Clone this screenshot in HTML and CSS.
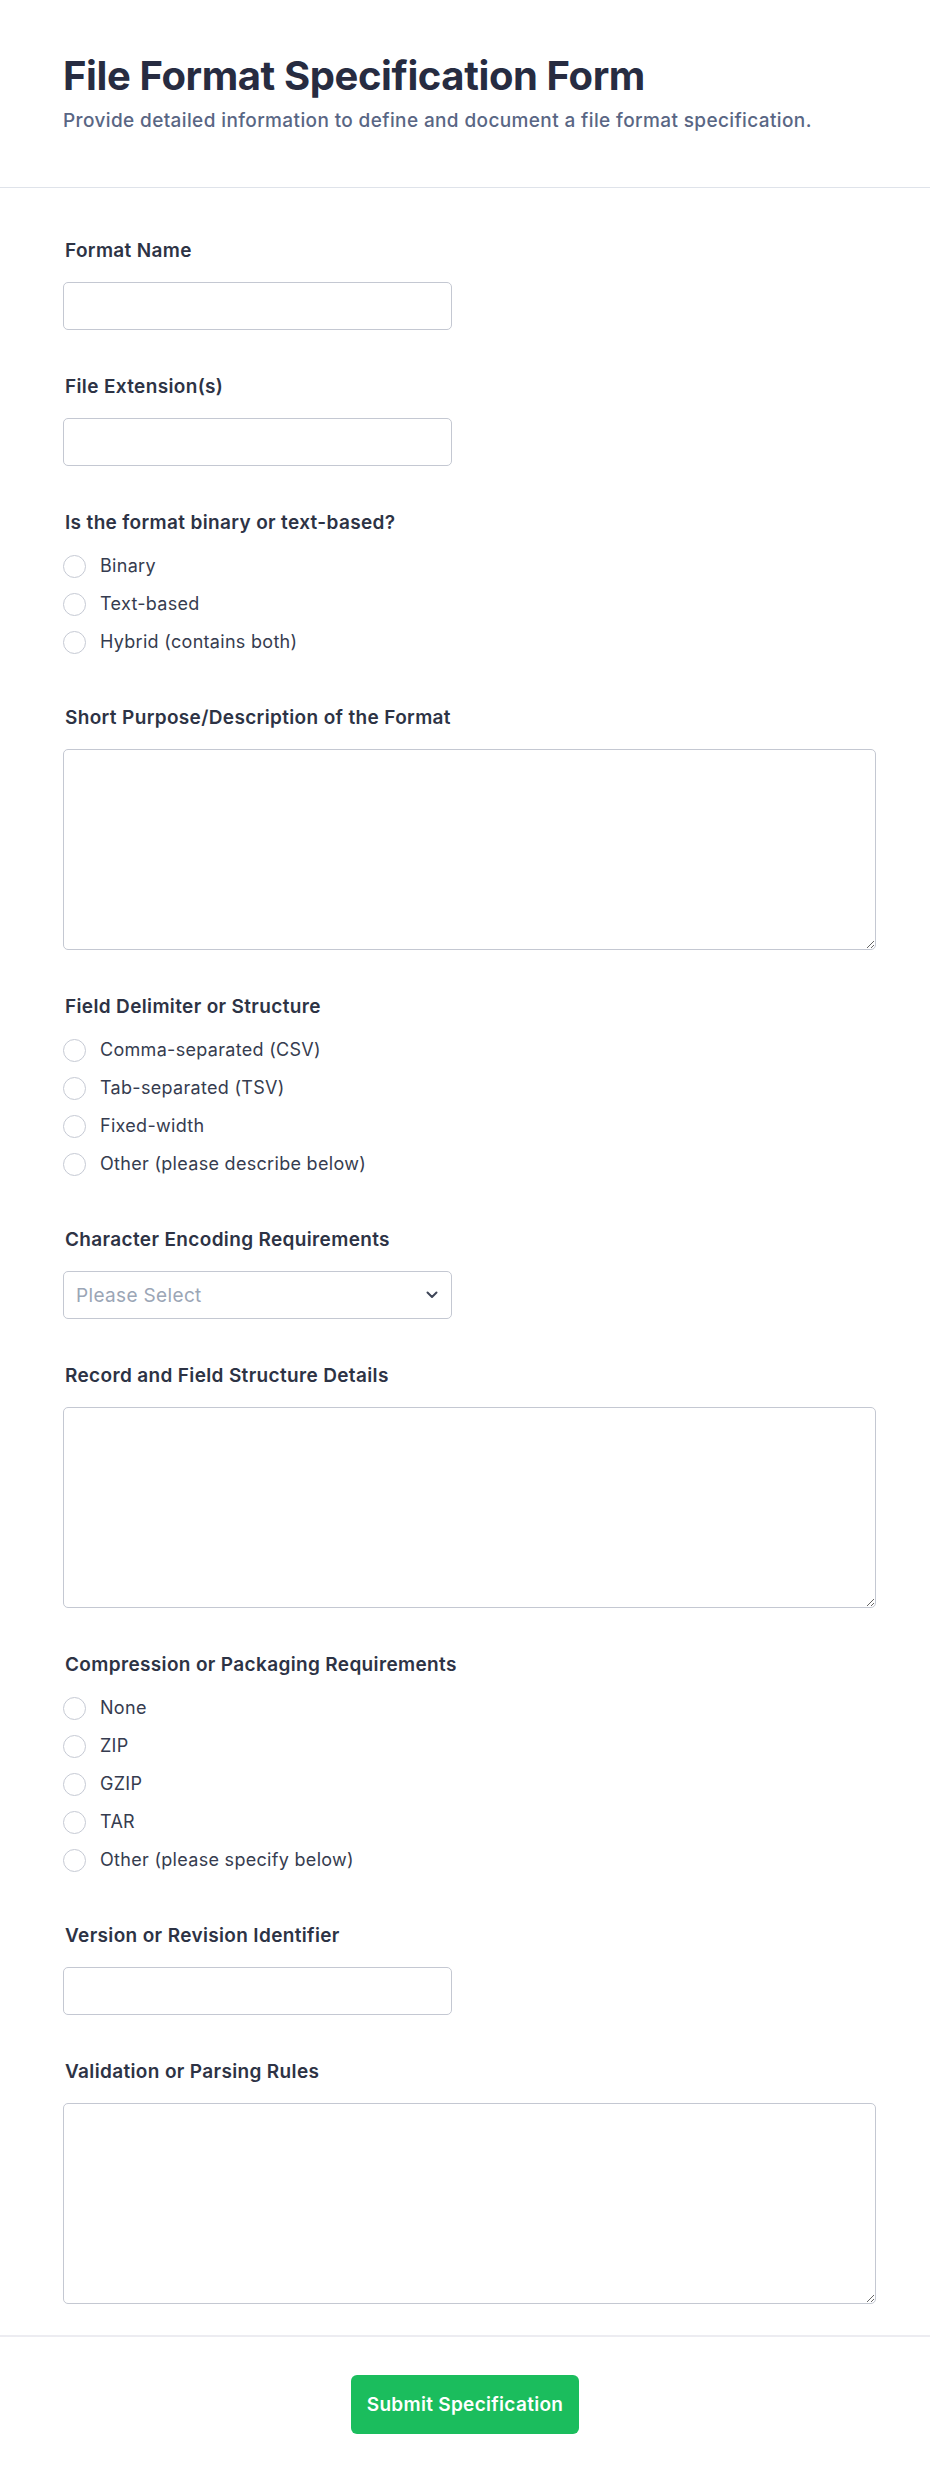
FILE: index.html
```html
<!DOCTYPE html>
<html lang="en">
<head>
<meta charset="utf-8">
<title>File Format Specification Form</title>
<link rel="stylesheet" href="styles.css">
</head>
<body>
<div class="page">
  <header class="header">
    <h1 class="title">File Format Specification Form</h1>
    <p class="subtitle">Provide detailed information to define and document a file format specification.</p>
  </header>

  <form class="form">
    <div class="field">
      <label class="label" for="fname">Format Name</label>
      <input class="input" id="fname" type="text">
    </div>

    <div class="field">
      <label class="label" for="fext">File Extension(s)</label>
      <input class="input" id="fext" type="text">
    </div>

    <div class="field">
      <div class="label label-group">Is the format binary or text-based?</div>
      <div class="options">
        <label class="option"><input class="radio" type="radio" name="kind"><span>Binary</span></label>
        <label class="option"><input class="radio" type="radio" name="kind"><span>Text-based</span></label>
        <label class="option"><input class="radio" type="radio" name="kind"><span>Hybrid (contains both)</span></label>
      </div>
    </div>

    <div class="field">
      <label class="label" for="purpose">Short Purpose/Description of the Format</label>
      <textarea class="textarea" id="purpose"></textarea>
    </div>

    <div class="field">
      <div class="label label-group">Field Delimiter or Structure</div>
      <div class="options">
        <label class="option"><input class="radio" type="radio" name="delim"><span>Comma-separated (CSV)</span></label>
        <label class="option"><input class="radio" type="radio" name="delim"><span>Tab-separated (TSV)</span></label>
        <label class="option"><input class="radio" type="radio" name="delim"><span>Fixed-width</span></label>
        <label class="option"><input class="radio" type="radio" name="delim"><span>Other (please describe below)</span></label>
      </div>
    </div>

    <div class="field">
      <label class="label" for="enc">Character Encoding Requirements</label>
      <div class="select-wrap">
        <select class="select" id="enc">
          <option>Please Select</option>
          <option>UTF-8</option>
          <option>UTF-16</option>
          <option>ASCII</option>
        </select>
        <svg class="chevron" width="12" height="8" viewBox="0 0 12 8" aria-hidden="true"><path d="M1.5 1.5 L6 6 L10.5 1.5" fill="none" stroke="#3f4658" stroke-width="2" stroke-linecap="round" stroke-linejoin="round"/></svg>
      </div>
    </div>

    <div class="field">
      <label class="label" for="record">Record and Field Structure Details</label>
      <textarea class="textarea" id="record"></textarea>
    </div>

    <div class="field">
      <div class="label label-group">Compression or Packaging Requirements</div>
      <div class="options">
        <label class="option"><input class="radio" type="radio" name="comp"><span>None</span></label>
        <label class="option"><input class="radio" type="radio" name="comp"><span>ZIP</span></label>
        <label class="option"><input class="radio" type="radio" name="comp"><span>GZIP</span></label>
        <label class="option"><input class="radio" type="radio" name="comp"><span>TAR</span></label>
        <label class="option"><input class="radio" type="radio" name="comp"><span>Other (please specify below)</span></label>
      </div>
    </div>

    <div class="field">
      <label class="label" for="version">Version or Revision Identifier</label>
      <input class="input" id="version" type="text">
    </div>

    <div class="field">
      <label class="label" for="rules">Validation or Parsing Rules</label>
      <textarea class="textarea" id="rules"></textarea>
    </div>
  </form>

  <footer class="footer">
    <button class="submit" type="button">Submit Specification</button>
  </footer>
</div>
</body>
</html>
```
FILE: styles.css
```css
* { box-sizing: border-box; }

html, body {
  margin: 0;
  padding: 0;
  background: #ffffff;
}

body {
  font-family: Inter, "Noto Sans", "Liberation Sans", sans-serif;
  color: #2d3345;
}

.page {
  width: 930px;
  min-height: 2482px;
  display: flex;
  flex-direction: column;
}

.header {
  padding: 52px 54px 52px 63px;
  border-bottom: 1px solid #dfe3ea;
}

.title {
  margin: 0 0 7px 0;
  font-size: 40px;
  line-height: 48px;
  font-weight: 700;
  letter-spacing: -0.4px;
  color: #272c41;
}

.subtitle {
  margin: 0;
  font-size: 19px;
  line-height: 28px;
  font-weight: 500;
  letter-spacing: 0.38px;
  color: #596684;
}

.form {
  padding: 51px 54px 31px 63px;
  display: flex;
  flex-direction: column;
  gap: 45px;
}

.field {
  display: flex;
  flex-direction: column;
  align-items: flex-start;
}

.label {
  display: block;
  font-size: 19px;
  line-height: 24px;
  font-weight: 600;
  letter-spacing: 0.35px;
  color: #2d3345;
  margin: 0 0 19px 2px;
}

.label-group {
  margin-bottom: 12px;
}

.input,
.select {
  width: 389px;
  height: 48px;
  border: 1px solid #c4c8d2;
  border-radius: 5px;
  background: #ffffff;
  font-family: inherit;
  font-size: 19px;
  letter-spacing: 0.35px;
  padding: 0 12px;
  color: #2d3345;
}

.textarea {
  width: 100%;
  height: 201px;
  border: 1px solid #c4c8d2;
  border-radius: 5px;
  background: #ffffff;
  font-family: inherit;
  font-size: 18px;
  padding: 10px 12px;
  resize: vertical;
  display: block;
}

.select-wrap {
  position: relative;
  width: 389px;
}

.select {
  appearance: none;
  -webkit-appearance: none;
  color: #9ba6b6;
  display: block;
}

.chevron {
  position: absolute;
  right: 14px;
  top: 20px;
  pointer-events: none;
}

.options {
  display: flex;
  flex-direction: column;
}

.option {
  display: flex;
  align-items: center;
  gap: 14px;
  padding: 7px 0;
  line-height: 24px;
  font-size: 18px;
  font-weight: 400;
  letter-spacing: 0.3px;
  color: #363c4f;
}

.radio {
  appearance: none;
  -webkit-appearance: none;
  width: 23px;
  height: 23px;
  margin: 0;
  border: 1.5px solid #c6cad4;
  border-radius: 50%;
  background: #ffffff;
  flex: none;
}

.footer {
  border-top: 2px solid #ececf1;
  padding: 38px 0 49px;
  display: flex;
  justify-content: center;
  background: #ffffff;
}

.submit {
  height: 59px;
  padding: 0 16px;
  border: none;
  border-radius: 6px;
  background: #1bbd5d;
  color: #ffffff;
  font-family: inherit;
  font-size: 19px;
  font-weight: 600;
  letter-spacing: 0.3px;
  cursor: pointer;
}
```
